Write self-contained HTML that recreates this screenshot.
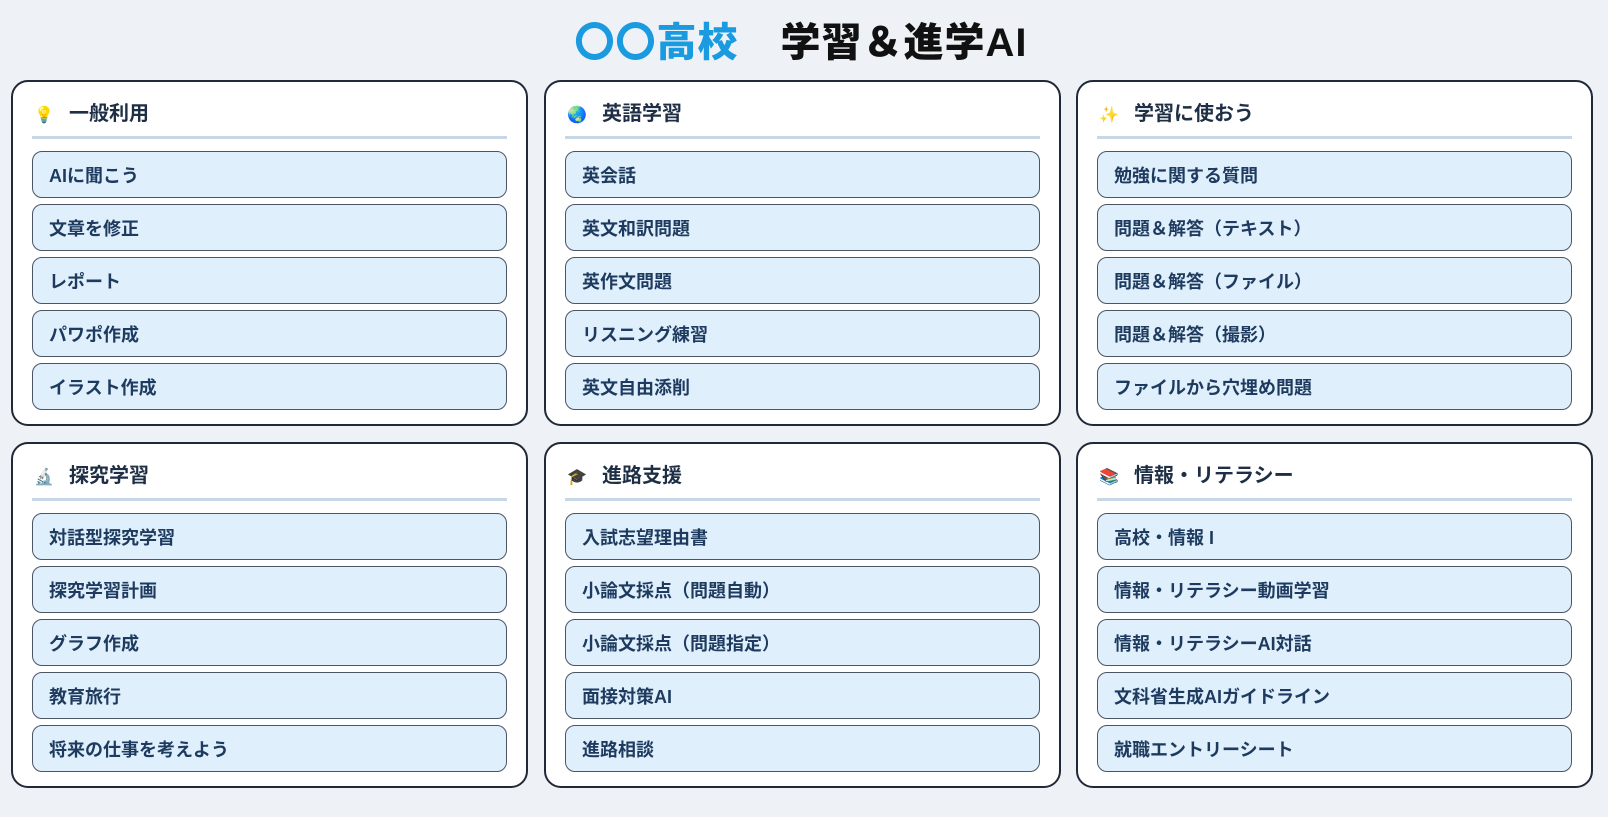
<!DOCTYPE html>
<html><head><meta charset="utf-8"><style>
*{box-sizing:border-box;margin:0;padding:0}
body{width:1608px;height:817px;background:#eef2f7;font-family:"Liberation Sans","Noto Sans CJK JP",sans-serif;overflow:hidden;position:relative}
h1{position:absolute;top:17px;left:0;width:1602px;text-align:center;font-size:40px;font-weight:900;line-height:52px;color:#111;letter-spacing:1px}
h1 .b{color:#1a9be0;margin-right:42px}
.card{position:absolute;width:517px;height:346px;background:#fff;border:2px solid #1f2937;border-radius:17px;padding:0 19px}
.hd{height:57px;border-bottom:3px solid #c8d7e6;display:flex;align-items:center;padding-top:10px;padding-left:2px;font-size:20px;font-weight:700;color:#1e2e45;line-height:24px}
.hd .i{width:20px;font-size:16px;margin-right:15px;text-align:center;line-height:20px;position:relative;top:2px}
.btn{height:47px;margin-top:12px;background:#dff0fc;border:1px solid #4b5563;border-radius:10px;display:flex;align-items:center;padding-left:16px;font-size:18px;font-weight:700;color:#1e3a5f}
.btn+.btn{margin-top:6px}
</style></head><body>
<h1><span class="b">〇〇高校</span>学習＆進学AI</h1>
<div class="card" style="left:11px;top:80px"><div class="hd"><span class="i">💡</span>一般利用</div>
<div class="btn">AIに聞こう</div><div class="btn">文章を修正</div><div class="btn">レポート</div><div class="btn">パワポ作成</div><div class="btn">イラスト作成</div></div>
<div class="card" style="left:544px;top:80px"><div class="hd"><span class="i">🌏</span>英語学習</div>
<div class="btn">英会話</div><div class="btn">英文和訳問題</div><div class="btn">英作文問題</div><div class="btn">リスニング練習</div><div class="btn">英文自由添削</div></div>
<div class="card" style="left:1076px;top:80px"><div class="hd"><span class="i">✨</span>学習に使おう</div>
<div class="btn">勉強に関する質問</div><div class="btn">問題＆解答（テキスト）</div><div class="btn">問題＆解答（ファイル）</div><div class="btn">問題＆解答（撮影）</div><div class="btn">ファイルから穴埋め問題</div></div>
<div class="card" style="left:11px;top:442px"><div class="hd"><span class="i">🔬</span>探究学習</div>
<div class="btn">対話型探究学習</div><div class="btn">探究学習計画</div><div class="btn">グラフ作成</div><div class="btn">教育旅行</div><div class="btn">将来の仕事を考えよう</div></div>
<div class="card" style="left:544px;top:442px"><div class="hd"><span class="i">🎓</span>進路支援</div>
<div class="btn">入試志望理由書</div><div class="btn">小論文採点（問題自動）</div><div class="btn">小論文採点（問題指定）</div><div class="btn">面接対策AI</div><div class="btn">進路相談</div></div>
<div class="card" style="left:1076px;top:442px"><div class="hd"><span class="i">📚</span>情報・リテラシー</div>
<div class="btn">高校・情報 I</div><div class="btn">情報・リテラシー動画学習</div><div class="btn">情報・リテラシーAI対話</div><div class="btn">文科省生成AIガイドライン</div><div class="btn">就職エントリーシート</div></div>
</body></html>
